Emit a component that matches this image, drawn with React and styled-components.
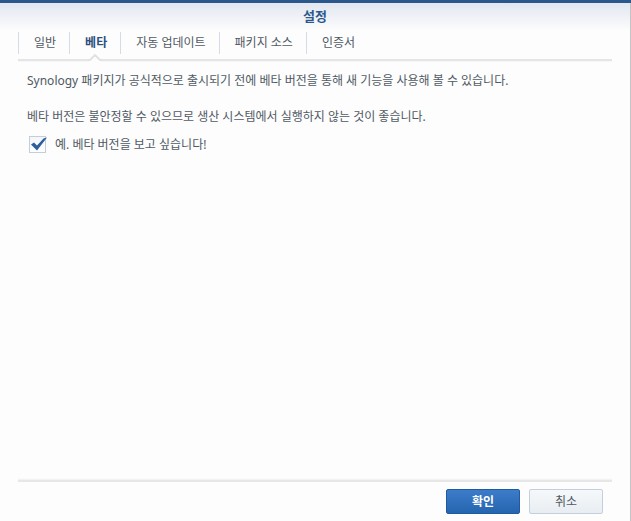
import React, { useState } from "react";
import styled, { createGlobalStyle } from "styled-components";

const GlobalStyle = createGlobalStyle`
  *, *::before, *::after { box-sizing: border-box; }
  body {
    margin: 0;
    background: #fdfdfd;
    color: #505a64;
    font: 12px/18px "Noto Sans", "Noto Sans CJK KR", sans-serif;
  }
  button, input { font: inherit; }
`;

const Dialog = styled.main`
  display: flex;
  flex-direction: column;
  min-height: 100vh;
  padding: 0 19px 0 18px;
  border-top: 3px solid #2b588c;
  background: linear-gradient(#e1e6f0, #fdfdfd 28px);
  box-shadow: inset -1px 0 #c4c4c6;
`;

const Title = styled.h1`
  margin: 0;
  padding: 4px 0 7px;
  color: #2b588c;
  font-size: 13px;
  line-height: 18px;
  font-weight: 700;
  text-align: center;
`;

const TabList = styled.div`
  display: flex;
  height: 27px;
`;

const Tab = styled.button`
  position: relative;
  height: 22px;
  padding: 0 13px 0 15px;
  border: 0;
  border-left: 1px solid #d3dce8;
  background: none;
  color: ${(p) => (p.$active ? "#2b4f7d" : "#505a64")};
  font-weight: ${(p) => (p.$active ? 700 : 400)};
  line-height: 22px;
  white-space: nowrap;
  cursor: pointer;
`;

const Pointer = styled.svg`
  position: absolute;
  top: 100%;
  left: 50%;
  margin-left: -7px;
  display: block;
`;

const Rule = styled.div`
  flex: none;
  height: ${(p) => (p.$bottom ? "4px" : "3px")};
  background: ${(p) =>
    p.$bottom
      ? "linear-gradient(#fafafa 1px, #f3f3f3 1px 2px, #e7e7e7 2px)"
      : "linear-gradient(#e5e5e5 2px, #f6f6f6 2px)"};
`;

const Panel = styled.section`
  flex: 1;
  padding: 10px 9px;
`;

const Paragraph = styled.p`
  margin: 0 0 ${(p) => (p.$tight ? "10px" : "18px")};
`;

const Option = styled.label`
  display: flex;
  align-items: flex-start;
  gap: 9px;
  padding-left: 2px;
  cursor: pointer;
`;

const CheckBox = styled.span`
  position: relative;
  width: 17px;
  height: 17px;
`;

const CheckInput = styled.input`
  appearance: none;
  display: block;
  width: 17px;
  height: 17px;
  margin: 0;
  border: 1px solid #c3cedb;
  background: linear-gradient(#f3f6f9, #ffffff);

  & + svg { visibility: hidden; }
  &:checked + svg { visibility: visible; }
`;

const CheckMark = styled.svg`
  position: absolute;
  top: 0;
  left: 1px;
  pointer-events: none;
`;

const Footer = styled.footer`
  display: flex;
  justify-content: flex-end;
  gap: 9px;
  padding: 7px 9px;
`;

const Button = styled.button`
  width: 74px;
  height: 25px;
  padding: 1px 0 0;
  border: 1px solid ${(p) => (p.$primary ? "#1f5aa0" : "#c3cfdc")};
  border-radius: 2px;
  background: ${(p) =>
    p.$primary
      ? "linear-gradient(#3c7cc8, #2565b0)"
      : "linear-gradient(#f6f9fb, #e8edf2)"};
  color: ${(p) => (p.$primary ? "#ffffff" : "#505a64")};
  font-weight: ${(p) => (p.$primary ? 700 : 400)};
  line-height: 22px;
  cursor: pointer;
`;

const tabs = ["일반", "베타", "자동 업데이트", "패키지 소스", "인증서"];

export default function App() {
  const [active, setActive] = useState(1);
  const [beta, setBeta] = useState(true);

  return (
    <>
      <GlobalStyle />
      <Dialog>
        <Title>설정</Title>
        <TabList role="tablist">
          {tabs.map((label, i) => (
            <Tab
              key={label}
              type="button"
              role="tab"
              aria-selected={i === active}
              $active={i === active}
              onClick={() => setActive(i)}
            >
              {label}
              {i === active && (
                <Pointer width="14" height="8" viewBox="0 0 14 8" aria-hidden="true">
                  <path d="M1 6 L7 1 L13 6 V8 H1 Z" fill="#fdfdfd" />
                  <path d="M0 6 H2 L7 1 L12 6 H14" fill="none" stroke="#e2e2e2" strokeWidth="2" />
                </Pointer>
              )}
            </Tab>
          ))}
        </TabList>
        <Rule />
        <Panel role="tabpanel">
          <Paragraph>
            Synology 패키지가 공식적으로 출시되기 전에 베타 버전을 통해 새 기능을 사용해 볼 수 있습니다.
          </Paragraph>
          <Paragraph $tight>
            베타 버전은 불안정할 수 있으므로 생산 시스템에서 실행하지 않는 것이 좋습니다.
          </Paragraph>
          <Option>
            <CheckBox>
              <CheckInput
                type="checkbox"
                checked={beta}
                onChange={(e) => setBeta(e.target.checked)}
              />
              <CheckMark width="17" height="17" viewBox="0 0 17 17" aria-hidden="true">
                <path d="M1 8.5 L4 6.5 L7 9.5 L13.5 2.5 L17 1.5 L7 14.5 Z" fill="#2c5f9e" />
              </CheckMark>
            </CheckBox>
            예. 베타 버전을 보고 싶습니다!
          </Option>
        </Panel>
        <Rule $bottom />
        <Footer>
          <Button type="button" $primary>확인</Button>
          <Button type="button">취소</Button>
        </Footer>
      </Dialog>
    </>
  );
}
